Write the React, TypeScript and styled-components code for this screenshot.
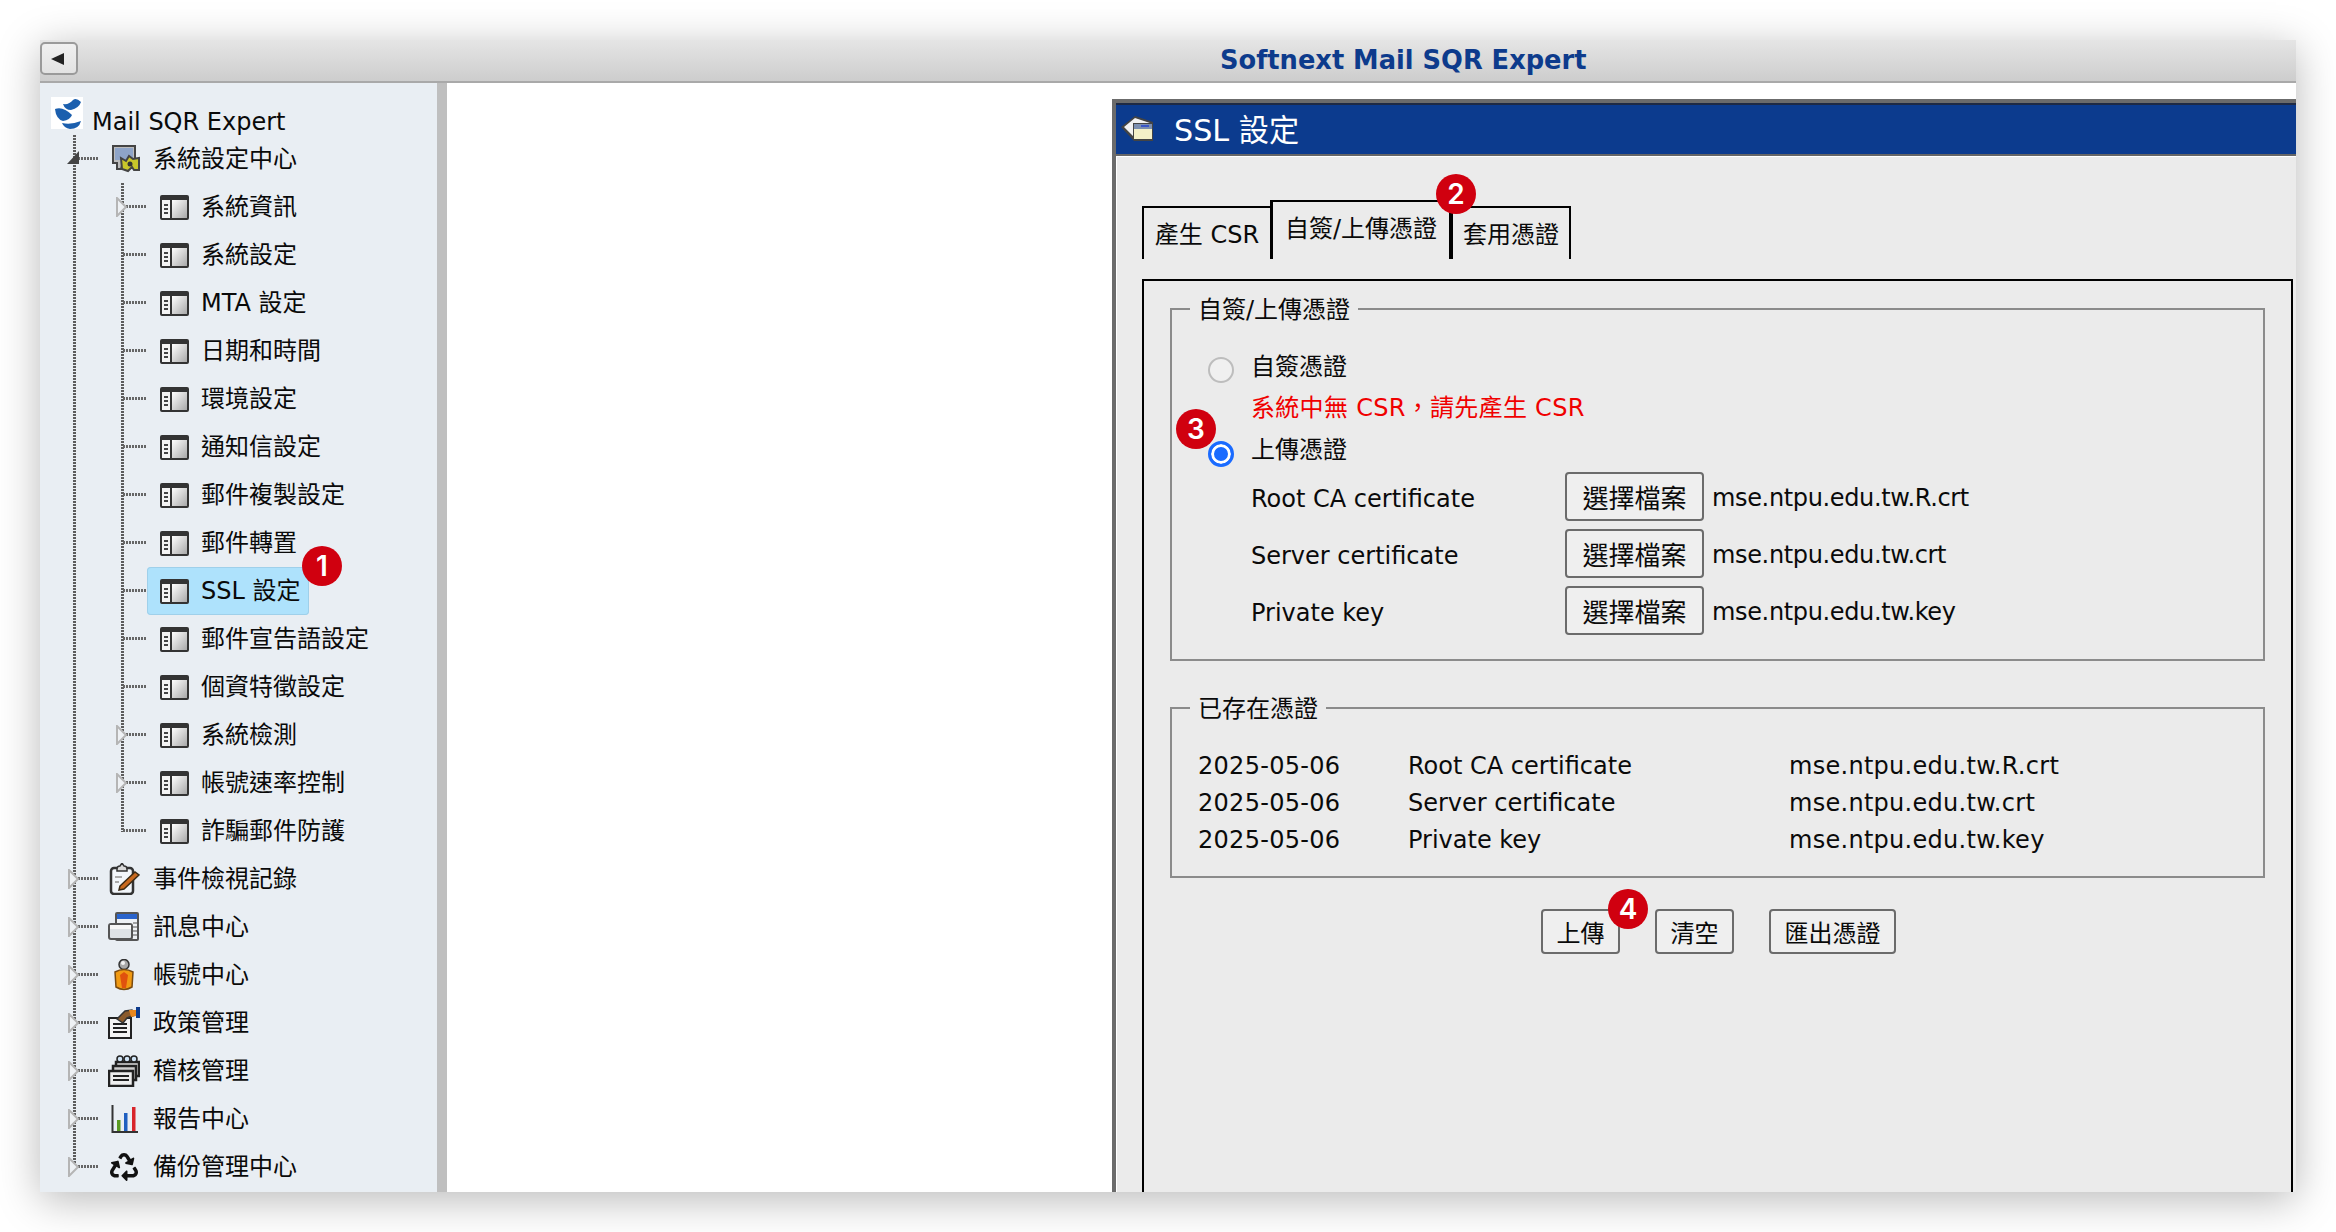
import React from 'react';
import styled, { createGlobalStyle } from 'styled-components';
import { FaRecycle } from 'react-icons/fa';

const FONT = `"DejaVu Sans", "Noto Sans CJK TC", sans-serif`;

const Global = createGlobalStyle`
  html, body { margin: 0; padding: 0; background: #fff; }
  body { width: 2336px; height: 1232px; overflow: hidden; font-family: ${FONT}; font-size: 24px; color: #0a0a0a; }
  * { box-sizing: border-box; }
`;

const Page = styled.div`
  width: 2336px;
  height: 1232px;
  padding: 40px;
`;

const Window = styled.div`
  width: 2256px;
  height: 1152px;
  display: flex;
  flex-direction: column;
  overflow: hidden;
  box-shadow: 0 8px 40px rgba(0, 0, 0, 0.28);
`;

const Toolbar = styled.header`
  height: 43px;
  flex: none;
  display: flex;
  align-items: flex-start;
  padding-top: 2px;
  background: linear-gradient(#e5e5e5, #cdcdcd);
  border-bottom: 2px solid #a9a9a9;
`;

const BackButton = styled.button`
  width: 38px;
  height: 33px;
  padding: 0;
  display: flex;
  align-items: center;
  justify-content: center;
  background: linear-gradient(#f0f0f0, #e2e2e2);
  border: 2px solid #9a9a9a;
  border-radius: 5px;
`;

const BackArrow = styled.span`
  width: 0;
  height: 0;
  border-top: 6px solid transparent;
  border-bottom: 6px solid transparent;
  border-right: 13px solid #222;
  margin-right: 3px;
`;

const AppTitle = styled.h1`
  margin: 0 0 0 1142px;
  font-size: 25.7px;
  font-weight: 700;
  line-height: 36px;
  color: #0d3b8c;
  white-space: nowrap;
`;

const Main = styled.div`
  flex: 1;
  min-height: 0;
  display: flex;
`;

const Sidebar = styled.nav`
  width: 397px;
  flex: none;
  background: #e9eef3;
  padding-top: 12px;
  overflow: hidden;
`;

const Splitter = styled.div`
  width: 10px;
  flex: none;
  background: #bfbfbf;
`;

const RootRow = styled.div`
  height: 40px;
  display: flex;
  align-items: flex-start;
  gap: 9px;
  padding: 2px 0 0 11px;
`;

const RootLabel = styled.span`
  line-height: 34px;
  margin-top: 8px;
  white-space: nowrap;
`;

const BranchList = styled.ul<{ $indent: number }>`
  list-style: none;
  margin: 0 0 0 ${p => p.$indent}px;
  padding: 0;
  position: relative;
  &::before {
    content: '';
    position: absolute;
    left: -1px;
    top: 0;
    bottom: 23px;
    width: 3px;
    background: repeating-linear-gradient(to bottom, #5c5c5c 0 2px, transparent 2px 3px);
  }
`;

const Row = styled.div`
  height: 48px;
  display: flex;
  align-items: center;
`;

const Branch = styled.span<{ $width: number }>`
  position: relative;
  flex: none;
  align-self: stretch;
  width: ${p => p.$width}px;
  &::after {
    content: '';
    position: absolute;
    left: 1px;
    top: 22px;
    width: 24px;
    height: 3px;
    background: repeating-linear-gradient(to right, #666 0 2px, transparent 2px 3px);
  }
`;

const Expander = styled.svg`
  position: absolute;
  z-index: 1;
  left: -8px;
  top: 14px;
  width: 16px;
  height: 20px;
`;

const GroupIcon = styled.span`
  width: 32px;
  height: 32px;
  flex: none;
  display: flex;
  align-items: center;
  justify-content: center;
  margin-right: 13px;
`;

const Label = styled.span`
  white-space: nowrap;
  line-height: 34px;
`;

const Leaf = styled.span<{ $active?: boolean }>`
  position: relative;
  height: 48px;
  margin-left: -13px;
  padding: 0 9px 0 13px;
  display: flex;
  align-items: center;
  gap: 12px;
  border-radius: 4px;
  background: ${p => (p.$active ? '#aee2fc' : 'transparent')};
  box-shadow: ${p => (p.$active ? 'inset 0 0 0 1px #9fd0ea' : 'none')};
`;

const Badge = styled.span<{ $top: number; $left: number }>`
  position: absolute;
  z-index: 3;
  top: ${p => p.$top}px;
  left: ${p => p.$left}px;
  width: 40px;
  height: 40px;
  border-radius: 50%;
  background: #d0000f;
  color: #fff;
  font-family: Inter, "Liberation Sans", sans-serif;
  font-size: 28px;
  font-weight: 600;
  line-height: 40px;
  text-align: center;
`;

const Content = styled.main`
  flex: 1;
  min-width: 0;
  background: #fff;
  padding: 16px 0 0 665px;
  display: flex;
`;

const Panel = styled.section`
  flex: 1;
  min-width: 0;
  display: flex;
  flex-direction: column;
  border-top: 4px solid #6b6b6b;
  border-left: 4px solid #6b6b6b;
`;

const PanelTitle = styled.h2`
  height: 53px;
  flex: none;
  margin: 0;
  display: flex;
  align-items: center;
  gap: 20px;
  padding: 0 0 3px 5px;
  background: #0c3b8e;
  border-top: 2px solid #1f2a44;
  border-bottom: 2px solid #666;
  color: #fff;
  font-size: 30.2px;
  font-weight: 400;
  white-space: nowrap;
`;

const PanelBody = styled.div`
  position: relative;
  flex: 1;
  min-height: 0;
  display: flex;
  flex-direction: column;
  background: #ebebeb;
  border-top: 1px solid #fff;
  border-left: 1px solid #fff;
  padding: 43px 3px 0 25px;
`;

const Tabs = styled.div`
  display: flex;
  align-items: flex-end;
  height: 59px;
  flex: none;
`;

const Tab = styled.div<{ $active?: boolean; $width: number }>`
  width: ${p => p.$width}px;
  height: ${p => (p.$active ? 59 : 53)}px;
  margin-left: ${p => (p.$active ? -2 : 0)}px;
  margin-right: ${p => (p.$active ? -1 : 0)}px;
  position: relative;
  z-index: ${p => (p.$active ? 1 : 0)};
  border: 2px solid #000;
  border-bottom: none;
  border-left-width: ${p => (p.$active ? 3 : 2)}px;
  border-right-width: ${p => (p.$active ? 3 : 2)}px;
  text-align: center;
  line-height: ${p => (p.$active ? 54 : 55)}px;
  white-space: nowrap;
`;

const TabBox = styled.div`
  flex: 1;
  margin-top: 20px;
  border: 2px solid #000;
  border-bottom: none;
  padding: 11px 26px 0;
`;

const Group = styled.fieldset`
  margin: 0 0 30px;
  min-width: 0;
  border: 2px solid #8b8b8b;
  padding: 18px 26px 24px;
`;

const GroupLegend = styled.legend`
  margin-left: -8px;
  padding: 0 8px;
  height: 34px;
  line-height: 37px;
  white-space: nowrap;
`;

const UploadForm = styled.div`
  padding-left: 10px;
`;

const OptionRow = styled.label`
  height: 40px;
  display: flex;
  align-items: center;
  gap: 17px;
`;

const Radio = styled.input.attrs({ type: 'radio' })<{ $drop: number }>`
  appearance: none;
  width: 26px;
  height: 26px;
  margin: ${p => p.$drop}px 0 0;
  flex: none;
  border-radius: 50%;
  border: 2px solid #bdbdbd;
  background: #f0f0f0;
  &:checked {
    border: 3px solid #1a6bff;
    background: #1a6bff;
    box-shadow: inset 0 0 0 3px #fff;
  }
`;

const Warning = styled.div`
  height: 38px;
  margin: 5px 0 0 43px;
  line-height: 39px;
  letter-spacing: 0.3px;
  color: #f00000;
  white-space: nowrap;
`;

const FileList = styled.div`
  margin: 5px 0 0 43px;
  display: flex;
  flex-direction: column;
  gap: 8px;
`;

const FileRow = styled.div`
  height: 49px;
  display: grid;
  grid-template-columns: 314px 139px 1fr;
  align-items: center;
`;

const FileLabel = styled.span`
  padding-top: 4px;
  white-space: nowrap;
`;

const FileName = styled.span`
  margin-left: 8px;
  padding-top: 2px;
  letter-spacing: -0.35px;
  white-space: nowrap;
`;

const Button = styled.button`
  height: 100%;
  padding: 0 13.5px;
  font-family: ${FONT};
  font-size: 24px;
  color: #0a0a0a;
  background: #efefef;
  border: 2px solid #6b6b6b;
  border-radius: 4px;
  white-space: nowrap;
`;

const FileButton = styled(Button)`
  padding: 0;
  font-size: 26px;
`;

const ExistingGroup = styled(Group)`
  margin-bottom: 0;
  padding: 20px 26px 20px;
`;

const CertRow = styled.div`
  height: 37px;
  padding-top: 4px;
  display: grid;
  grid-template-columns: 210px 381px 1fr;
  align-items: center;
  white-space: nowrap;
`;

const CertValue = styled.span`
  letter-spacing: 0.28px;
`;

const Actions = styled.div`
  height: 45px;
  margin-top: 31px;
  padding-left: 2px;
  display: flex;
  justify-content: center;
  gap: 35px;
  position: relative;
`;

const Gradient = () => (
  <defs>
    <linearGradient id="paneFill" x1="0" y1="0" x2="1" y2="1">
      <stop offset="0" stopColor="#fff" />
      <stop offset="1" stopColor="#a9a9a9" />
    </linearGradient>
  </defs>
);

const PaneIcon = () => (
  <svg width="29" height="25" viewBox="0 0 29 25" style={{ flex: 'none' }}>
    <rect x="1" y="1" width="27" height="23" rx="1" fill="#f4f4f4" stroke="#333" strokeWidth="2" />
    <rect x="1" y="1" width="27" height="4" fill="#333" />
    <rect x="12" y="5" width="15" height="18" fill="url(#paneFill)" />
    <rect x="10" y="4" width="2" height="20" fill="#333" />
    <rect x="4" y="9" width="4" height="2" fill="#444" />
    <rect x="4" y="13" width="4" height="2" fill="#444" />
    <rect x="4" y="17" width="4" height="2" fill="#444" />
  </svg>
);

const Logo = () => (
  <svg width="32" height="32" viewBox="0 0 32 32" style={{ flex: 'none' }}>
    <rect width="32" height="32" fill="#fff" />
    <path d="M12 7Q18 8 22 3Q25 0 30 5Q28 11 20 13Q14 13 12 7Z" fill="#1b5fae" />
    <path d="M4 12Q12 9 21 18Q19 23 12 24Q5 22 4 12Z" fill="#1b5fae" />
    <path d="M11 26Q20 28 30 24Q28 32 19 32Q13 31 11 26Z" fill="#1b5fae" />
  </svg>
);

const SystemIcon = () => (
  <svg width="32" height="32" viewBox="0 0 32 32">
    <path d="M5 3H27V20H15L13 26H9V20H5Z" fill="#bcbcbc" stroke="#444" strokeWidth="2" />
    <rect x="7" y="5" width="18" height="12" fill="#8ea4c8" />
    <path d="M13 15L18 18L21 13L25 16L31 15V27H26L24 24L20 28L14 26Z" fill="#c9c62a" stroke="#444" strokeWidth="2" />
    <circle cx="22" cy="21" r="2.5" fill="#333" />
  </svg>
);

const ClipboardIcon = () => (
  <svg width="32" height="32" viewBox="0 0 32 32">
    <rect x="3" y="5" width="22" height="26" rx="3" fill="#f2f6fa" stroke="#333" strokeWidth="2.5" />
    <path d="M9 6Q9 3 12 3L14 0L16 3Q19 3 19 6V8H9Z" fill="#d9d9d9" stroke="#333" strokeWidth="1.5" />
    <path d="M12 23L27 9L31 12L16 26L11 27Z" fill="#c8691e" stroke="#3b2a14" strokeWidth="1.5" />
    <path d="M7 14H14M7 19H11" stroke="#aaa" strokeWidth="2" />
  </svg>
);

const WindowIcon = () => (
  <svg width="32" height="32" viewBox="0 0 32 32">
    <rect x="8" y="2" width="22" height="27" rx="1" fill="#eef1f4" stroke="#555" strokeWidth="2" />
    <rect x="9" y="3" width="20" height="5" fill="#2a64cc" />
    <path d="M25 12H29M25 16H29M25 20H29M25 24H29" stroke="#888" strokeWidth="1.5" />
    <rect x="1" y="13" width="23" height="15" rx="2" fill="#dfe3e6" stroke="#555" strokeWidth="2" />
    <rect x="2" y="14" width="21" height="4" fill="#f7f7f7" />
  </svg>
);

const PersonIcon = () => (
  <svg width="32" height="32" viewBox="0 0 32 32">
    <circle cx="16" cy="5.5" r="5" fill="#a8a8a8" stroke="#333" strokeWidth="1.5" />
    <circle cx="15" cy="4" r="2" fill="#f2f2f2" />
    <path d="M7 13Q16 8 25 13L24 28Q16 33 8 28Z" fill="#f19a12" stroke="#7a4a10" strokeWidth="1.5" />
    <path d="M12 16L16 13L20 16L18 29H14Z" fill="#e0520e" />
  </svg>
);

const PolicyIcon = () => (
  <svg width="32" height="32" viewBox="0 0 32 32">
    <path d="M1 11H23V31H1Z" fill="#f3f3f3" stroke="#222" strokeWidth="2" />
    <path d="M5 17H19M5 21H19M5 25H19" stroke="#222" strokeWidth="2" />
    <path d="M9 12L17 4L24 3L27 8L19 11L15 16Z" fill="#8a5a2b" stroke="#333" strokeWidth="1.5" />
    <path d="M21 3L28 3V9L23 10Z" fill="#e8871e" />
    <rect x="28" y="0" width="4" height="11" fill="#0d3b8c" />
  </svg>
);

const AuditIcon = () => (
  <svg width="32" height="32" viewBox="0 0 32 32">
    <rect x="8" y="7" width="23" height="14" fill="#ddd" stroke="#222" strokeWidth="2.5" />
    <rect x="5" y="11" width="23" height="14" fill="#ccc" stroke="#222" strokeWidth="2.5" />
    <rect x="1" y="16" width="24" height="15" fill="#eee" stroke="#222" strokeWidth="2.5" />
    <path d="M5 21H21M5 25H21" stroke="#222" strokeWidth="2" />
    <circle cx="12" cy="4" r="3" fill="#cfe3f5" stroke="#222" strokeWidth="1.5" />
    <circle cx="19" cy="4" r="3" fill="#cfe3f5" stroke="#222" strokeWidth="1.5" />
    <circle cx="26" cy="4" r="3" fill="#cfe3f5" stroke="#222" strokeWidth="1.5" />
  </svg>
);

const ChartIcon = () => (
  <svg width="32" height="32" viewBox="0 0 32 32">
    <path d="M4.5 2V29H30" fill="none" stroke="#333" strokeWidth="2" />
    <rect x="9" y="17" width="3.5" height="11" fill="#5a9a20" />
    <rect x="16" y="10" width="3.5" height="18" fill="#1f5fc0" />
    <rect x="24" y="4" width="3.5" height="24" fill="#d8242a" />
  </svg>
);

const TitleIcon = () => (
  <svg width="33" height="28" viewBox="0 0 33 28" style={{ flex: 'none' }}>
    <path d="M0 13L14 2L32 8V27H13Z" fill="#444" />
    <path d="M3 13L14 4L29 9H12V22Z" fill="#f2f2f2" />
    <rect x="13" y="10" width="18" height="15" fill="#f4f0c8" />
    <rect x="13" y="10" width="18" height="5" fill="#7c8fb0" />
    <rect x="20" y="11" width="8" height="2" fill="#3a56c8" />
  </svg>
);

const ExpandedMark = () => (
  <Expander viewBox="0 0 16 20">
    <path d="M1 15L13 2V15Z" fill="#444" />
  </Expander>
);

const CollapsedMark = () => (
  <Expander viewBox="0 0 16 20">
    <path d="M3 1L12 10L3 19Z" fill="#eef1f4" stroke="#b5b5b5" strokeWidth="2" />
  </Expander>
);

const leaves: { name: string; expandable?: boolean; active?: boolean }[] = [
  { name: '系統資訊', expandable: true },
  { name: '系統設定' },
  { name: 'MTA 設定' },
  { name: '日期和時間' },
  { name: '環境設定' },
  { name: '通知信設定' },
  { name: '郵件複製設定' },
  { name: '郵件轉置' },
  { name: 'SSL 設定', active: true },
  { name: '郵件宣告語設定' },
  { name: '個資特徵設定' },
  { name: '系統檢測', expandable: true },
  { name: '帳號速率控制', expandable: true },
  { name: '詐騙郵件防護' },
];

const groups: { name: string; icon: React.ReactNode }[] = [
  { name: '事件檢視記錄', icon: <ClipboardIcon /> },
  { name: '訊息中心', icon: <WindowIcon /> },
  { name: '帳號中心', icon: <PersonIcon /> },
  { name: '政策管理', icon: <PolicyIcon /> },
  { name: '稽核管理', icon: <AuditIcon /> },
  { name: '報告中心', icon: <ChartIcon /> },
  { name: '備份管理中心', icon: <FaRecycle size={28} color="#111" /> },
];

const certs = [
  ['Root CA certificate', 'mse.ntpu.edu.tw.R.crt'],
  ['Server certificate', 'mse.ntpu.edu.tw.crt'],
  ['Private key', 'mse.ntpu.edu.tw.key'],
];

export default function App() {
  return (
    <Page>
      <Global />
      <svg width="0" height="0" style={{ position: 'absolute' }}><Gradient /></svg>
      <Window>
        <Toolbar>
          <BackButton aria-label="back"><BackArrow /></BackButton>
          <AppTitle>Softnext Mail SQR Expert</AppTitle>
        </Toolbar>
        <Main>
          <Sidebar>
            <RootRow>
              <Logo />
              <RootLabel>Mail SQR Expert</RootLabel>
            </RootRow>
            <BranchList $indent={34}>
              <li>
                <Row>
                  <Branch $width={34}><ExpandedMark /></Branch>
                  <GroupIcon><SystemIcon /></GroupIcon>
                  <Label>系統設定中心</Label>
                </Row>
                <BranchList $indent={48}>
                  {leaves.map(leaf => (
                    <li key={leaf.name}>
                      <Row>
                        <Branch $width={38}>{leaf.expandable && <CollapsedMark />}</Branch>
                        <Leaf $active={leaf.active}>
                          <PaneIcon />
                          <Label>{leaf.name}</Label>
                          {leaf.active && <Badge $top={-21} $left={155}>1</Badge>}
                        </Leaf>
                      </Row>
                    </li>
                  ))}
                </BranchList>
              </li>
              {groups.map(group => (
                <li key={group.name}>
                  <Row>
                    <Branch $width={34}><CollapsedMark /></Branch>
                    <GroupIcon>{group.icon}</GroupIcon>
                    <Label>{group.name}</Label>
                  </Row>
                </li>
              ))}
            </BranchList>
          </Sidebar>
          <Splitter />
          <Content>
            <Panel>
              <PanelTitle>
                <TitleIcon />
                SSL 設定
              </PanelTitle>
              <PanelBody>
                <Tabs>
                  <Tab $width={130}>產生 CSR</Tab>
                  <Tab $active $width={182}>自簽/上傳憑證</Tab>
                  <Tab $width={120}>套用憑證</Tab>
                </Tabs>
                <Badge $top={17} $left={319}>2</Badge>
                <TabBox>
                  <Group>
                    <GroupLegend>自簽/上傳憑證</GroupLegend>
                    <UploadForm>
                      <OptionRow>
                        <Radio name="mode" $drop={11} />
                        自簽憑證
                      </OptionRow>
                      <Warning>系統中無 CSR，請先產生 CSR</Warning>
                      <OptionRow>
                        <Radio name="mode" $drop={13} defaultChecked />
                        上傳憑證
                      </OptionRow>
                      <FileList>
                        {certs.map(([label, file]) => (
                          <FileRow key={label}>
                            <FileLabel>{label}</FileLabel>
                            <FileButton>選擇檔案</FileButton>
                            <FileName>{file}</FileName>
                          </FileRow>
                        ))}
                      </FileList>
                    </UploadForm>
                    <Badge $top={252} $left={59}>3</Badge>
                  </Group>
                  <ExistingGroup>
                    <GroupLegend>已存在憑證</GroupLegend>
                    {certs.map(([label, file]) => (
                      <CertRow key={label}>
                        <CertValue>2025-05-06</CertValue>
                        <span>{label}</span>
                        <CertValue>{file}</CertValue>
                      </CertRow>
                    ))}
                  </ExistingGroup>
                  <Actions>
                    <Button>上傳</Button>
                    <Button>清空</Button>
                    <Button>匯出憑證</Button>
                    <Badge $top={-20} $left={438}>4</Badge>
                  </Actions>
                </TabBox>
              </PanelBody>
            </Panel>
          </Content>
        </Main>
      </Window>
    </Page>
  );
}
